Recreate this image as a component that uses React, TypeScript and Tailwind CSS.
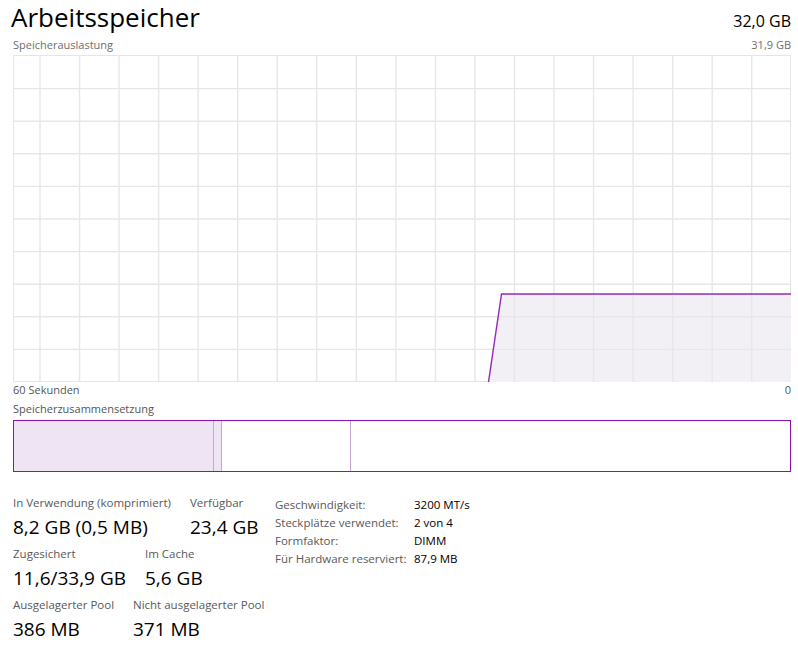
import React from 'react';

const font = { fontFamily: '"Open Sans", "Noto Sans", sans-serif' };

const W = 777;
const H = 326;
const colStart = 26;
const colStep = 39.54;
const rowStep = 32.6;

const UsageChart: React.FC = () => {
    const cols: number[] = [];
    for (let x = colStart; x < W; x += colStep) cols.push(x);
    const rows: number[] = [];
    for (let i = 1; i < 10; i++) rows.push(i * rowStep);

    const level = 238;
    const rampStart = 474.5;
    const rampEnd = 487.5;

    return (
        <div className="border border-[#e5e5e5] h-[327px] w-[778px] bg-white">
            <svg width={W} height={H} className="block">
                <polygon
                    points={`${rampStart},${H} ${rampEnd},${level} ${W},${level} ${W},${H}`}
                    fill="#f2f0f4"
                />
                {cols.map((x) => (
                    <line key={'c' + x} x1={x} x2={x} y1={0} y2={H} stroke="#e8e6ea" strokeWidth={1.4} />
                ))}
                {rows.map((y) => (
                    <line key={'r' + y} x1={0} x2={W} y1={y} y2={y} stroke="#e8e6ea" strokeWidth={1.4} />
                ))}
                <polyline
                    points={`${rampStart},${H} ${rampEnd},${level} ${W},${level}`}
                    fill="none"
                    stroke="#9528b8"
                    strokeWidth={1.4}
                />
            </svg>
        </div>
    );
};

const CompositionBar: React.FC = () => (
    <div className="flex h-[52px] w-[778px] border border-[#8b12ae] bg-white">
        <div className="w-[200px] bg-[#efe4f3] border-r border-[#caa3d9]" />
        <div className="w-[8px] bg-[#efe4f3] border-r border-[#caa3d9]" />
        <div className="w-[129px] border-r border-[#caa3d9]" />
        <div className="flex-1" />
    </div>
);

const Stat: React.FC<{ label: string; value: string; className?: string }> = ({ label, value, className }) => (
    <div className={className}>
        <div className="text-[11.5px] leading-[16px] text-[#595959] whitespace-nowrap">{label}</div>
        <div className="text-[19px] leading-[26px] text-black mt-[3px] whitespace-nowrap">{value}</div>
    </div>
);

const specs = [
    ['Geschwindigkeit:', '3200 MT/s'],
    ['Steckplätze verwendet:', '2 von 4'],
    ['Formfaktor:', 'DIMM'],
    ['Für Hardware reserviert:', '87,9 MB'],
];

export default function App() {
    return (
        <div className="w-[798px] h-[648px] bg-white overflow-hidden pl-[13px] pr-[7px]" style={font}>
            <div className="flex justify-between items-baseline -ml-[2px] h-[36px]">
                <h1 className="text-[26px] leading-[34px] text-black">Arbeitsspeicher</h1>
                <span className="text-[16px] text-black">32,0 GB</span>
            </div>
            <div className="flex justify-between text-[11px] leading-[18px] text-[#6e6e6e] h-[19px]">
                <span>Speicherauslastung</span>
                <span>31,9 GB</span>
            </div>
            <UsageChart />
            <div className="flex justify-between text-[11px] leading-[16px] text-[#555] h-[18px]">
                <span>60 Sekunden</span>
                <span>0</span>
            </div>
            <div className="text-[11px] leading-[18px] text-[#555] h-[20px]">Speicherzusammensetzung</div>
            <CompositionBar />

            <div className="flex mt-[23px]">
                <div className="w-[262px] flex flex-col gap-[6px]">
                    <div className="flex">
                        <Stat className="w-[177px]" label="In Verwendung (komprimiert)" value="8,2 GB (0,5 MB)" />
                        <Stat label="Verfügbar" value="23,4 GB" />
                    </div>
                    <div className="flex">
                        <Stat className="w-[132px]" label="Zugesichert" value="11,6/33,9 GB" />
                        <Stat label="Im Cache" value="5,6 GB" />
                    </div>
                    <div className="flex">
                        <Stat className="w-[120px]" label="Ausgelagerter Pool" value="386 MB" />
                        <Stat label="Nicht ausgelagerter Pool" value="371 MB" />
                    </div>
                </div>
                <div className="flex flex-col text-[11.5px] leading-[18px] pt-[1px]">
                    {specs.map(([k, v]) => (
                        <div key={k} className="flex">
                            <span className="w-[139px] text-[#595959] whitespace-nowrap">{k}</span>
                            <span className="text-black">{v}</span>
                        </div>
                    ))}
                </div>
            </div>
        </div>
    );
}
